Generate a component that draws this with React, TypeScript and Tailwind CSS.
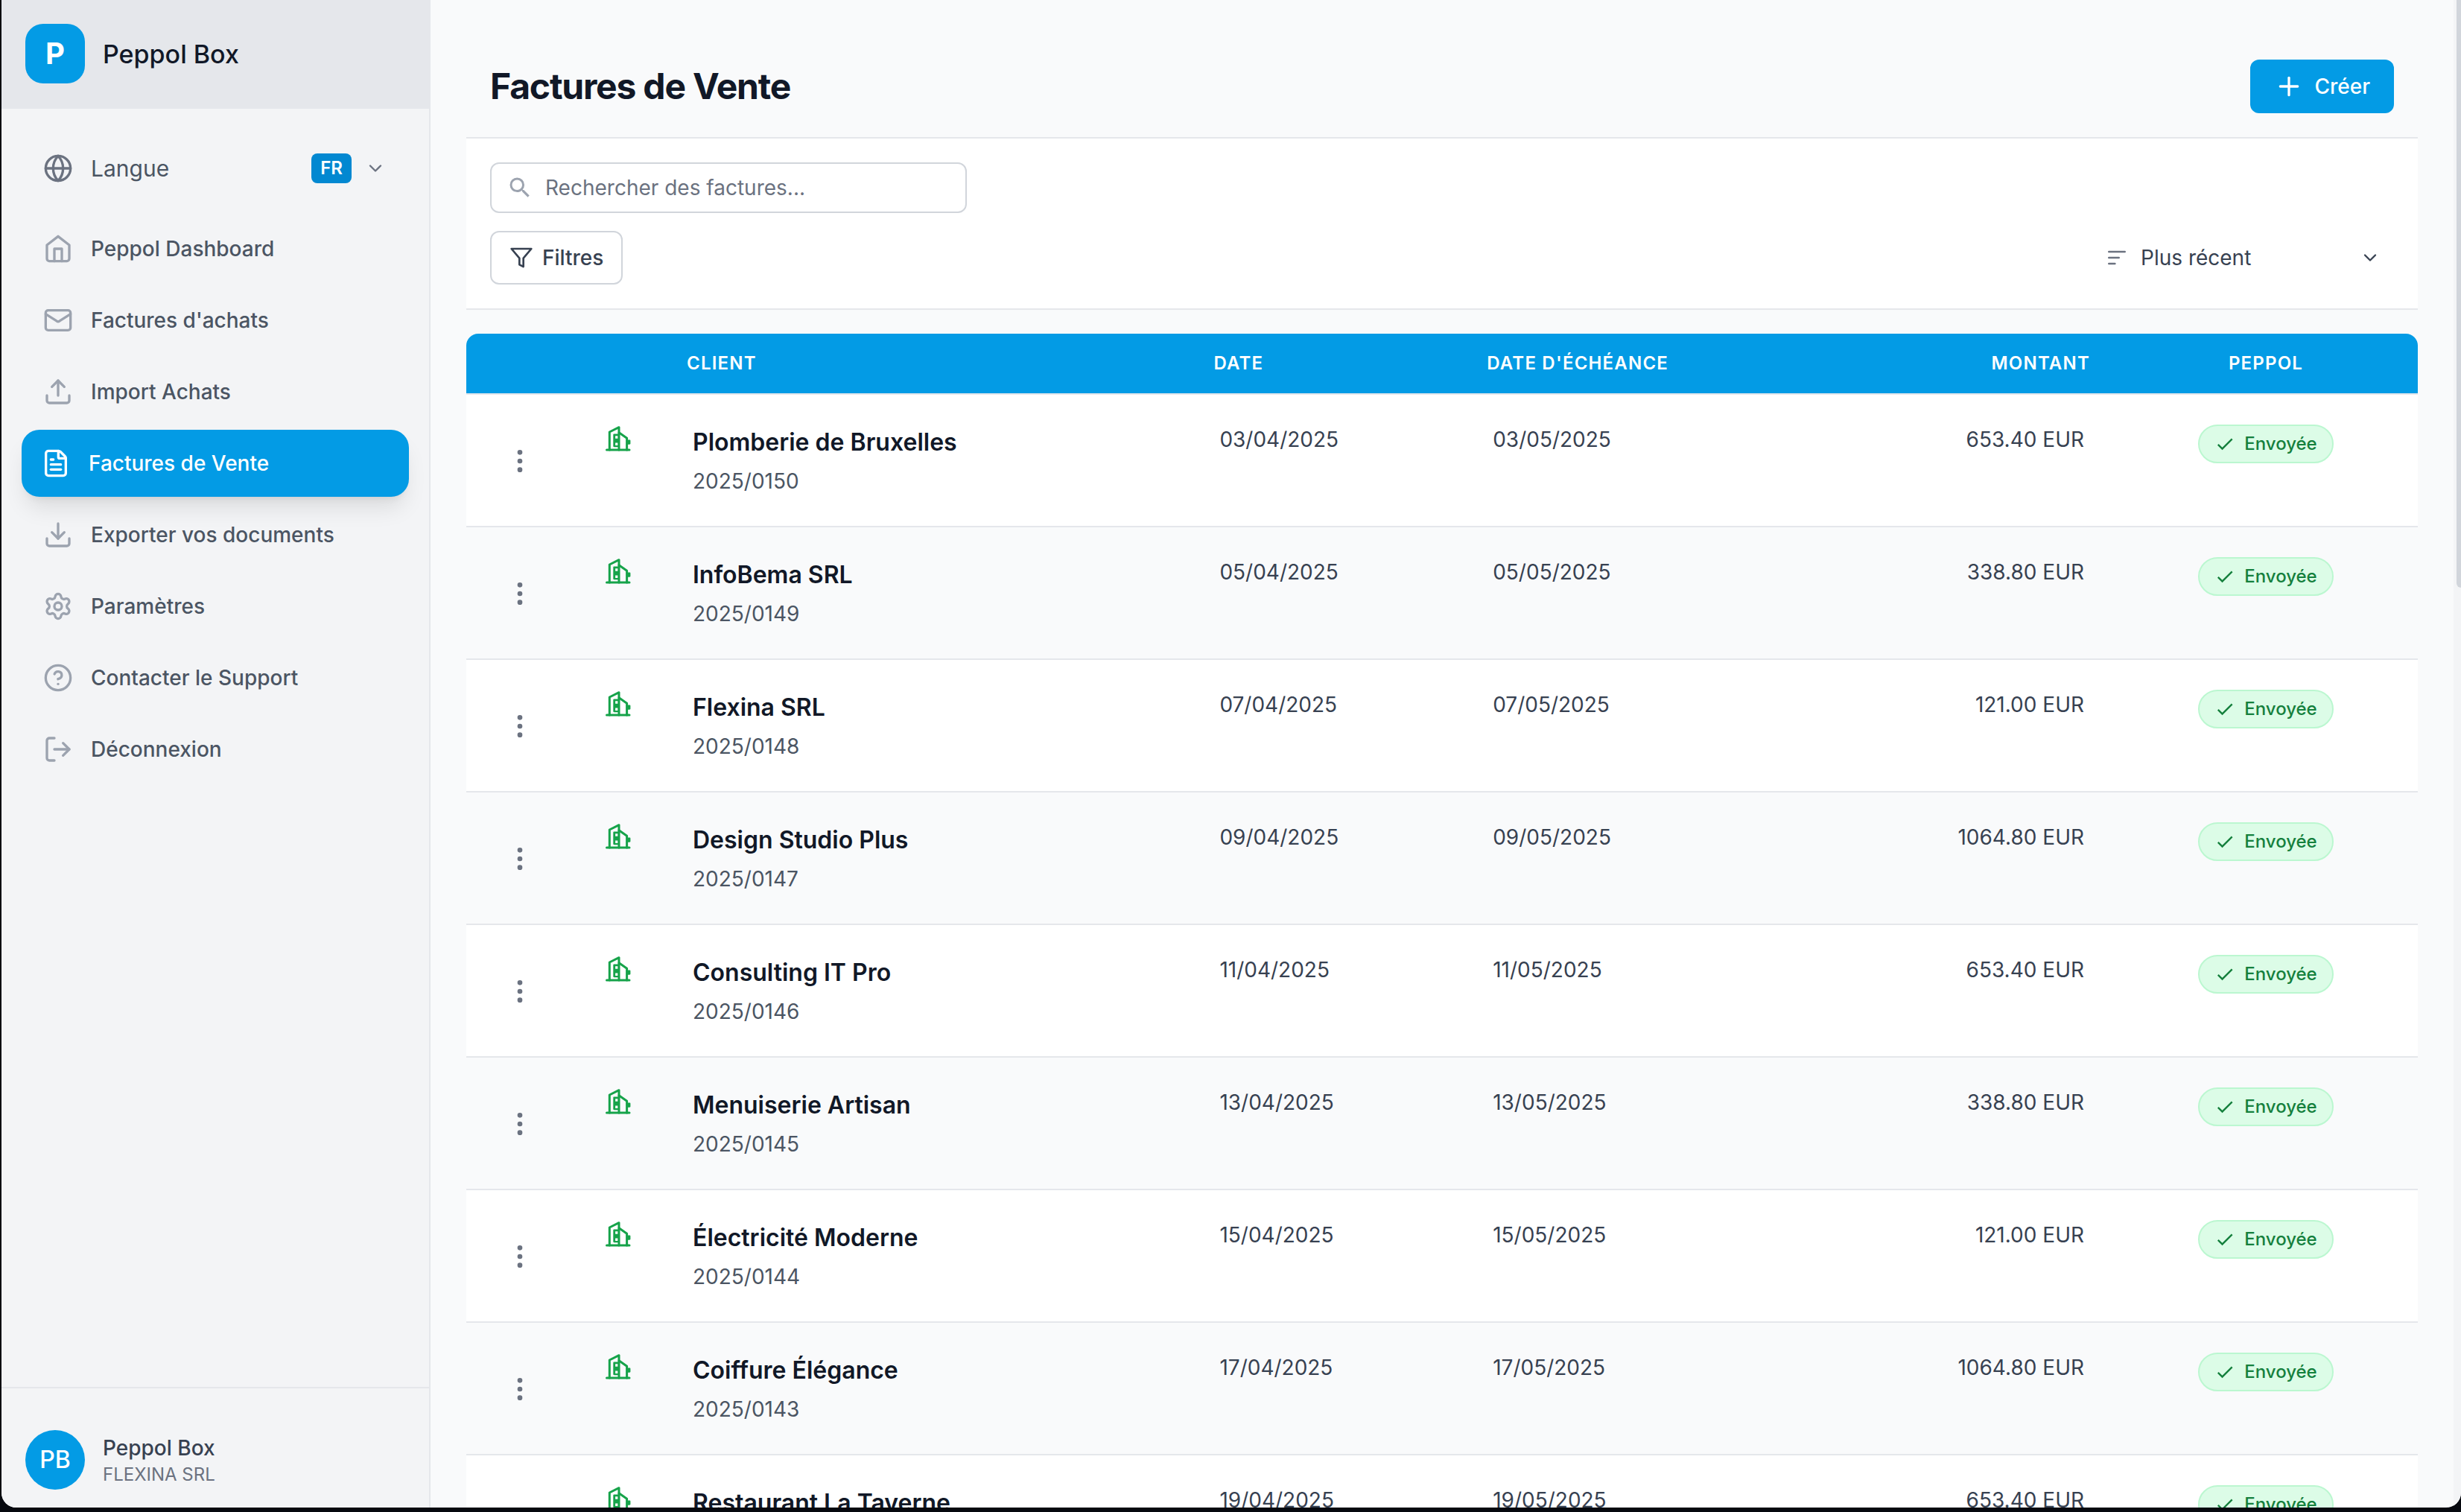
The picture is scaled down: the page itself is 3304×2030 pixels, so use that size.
import React, { useState } from 'react';
import {
    ChevronDown,
    Download,
    EllipsisVertical,
    FileText,
    Globe,
    LogOut,
    Mail,
    Plus,
    Settings,
    Upload,
} from 'lucide-react';
import { MdCheck, MdSearch } from 'react-icons/md';

type IconProps = { className?: string };

const HomeIcon = ({ className }: IconProps) => (
    <svg className={className} viewBox="0 0 24 24" fill="none" stroke="currentColor" strokeWidth="2" strokeLinecap="round" strokeLinejoin="round">
        <path d="m3 9 9-7 9 7v11a2 2 0 0 1-2 2H5a2 2 0 0 1-2-2z" />
        <path d="M9 22V12h6v10" />
    </svg>
);

const HelpIcon = ({ className }: IconProps) => (
    <svg className={className} viewBox="0 0 24 24" fill="none" stroke="currentColor" strokeWidth="2" strokeLinecap="round" strokeLinejoin="round">
        <circle cx="12" cy="12" r="10" />
        <path d="M9.09 9a3 3 0 0 1 5.83 1c0 2-3 3-3 3" />
        <path d="M12 17h.01" />
    </svg>
);

const FilterIcon = ({ className }: IconProps) => (
    <svg className={className} viewBox="0 0 24 24" fill="none" stroke="currentColor" strokeWidth="2" strokeLinecap="round" strokeLinejoin="round">
        <path d="M22 3H2l8 9.46V19l4 2v-8.54z" />
    </svg>
);

const SortIcon = ({ className }: IconProps) => (
    <svg className={className} viewBox="0 0 24 24" fill="none" stroke="currentColor" strokeWidth="2" strokeLinecap="round">
        <path d="M4 6h16M4 12h10M4 18h6" />
    </svg>
);

const CompanyIcon = ({ className }: IconProps) => (
    <svg className={className} viewBox="0 0 34 34" fill="none" stroke="currentColor" strokeWidth="3" strokeLinecap="round" strokeLinejoin="round">
        <path d="M1.5 32H32" />
        <path d="M5.3 32V8L18 1.7V32" />
        <path d="m18 8.8 10.6 7.4V32" />
        <path stroke="none" fill="currentColor" d="M28 18.6h4.2c.8 0 1.2.5 1.2 1.2v3.8c0 .7-.4 1.2-1.2 1.2H28z" />
        <path stroke="none" fill="currentColor" fillRule="evenodd" d="M11.6 10.6H18v17.6h-6.4c-.8 0-1.3-.5-1.3-1.2V11.8c0-.7.5-1.2 1.3-1.2zM13.1 13.2v3.6h3.6v-3.6zM13.1 22.4V26h3.6v-3.6z" />
    </svg>
);

const navItems = [
    { id: 'dashboard', label: 'Peppol Dashboard', icon: HomeIcon },
    { id: 'purchases', label: "Factures d'achats", icon: Mail },
    { id: 'import', label: 'Import Achats', icon: Upload },
    { id: 'sales', label: 'Factures de Vente', icon: FileText },
    { id: 'export', label: 'Exporter vos documents', icon: Download },
    { id: 'settings', label: 'Paramètres', icon: Settings },
    { id: 'support', label: 'Contacter le Support', icon: HelpIcon },
    { id: 'logout', label: 'Déconnexion', icon: LogOut },
];

const invoices = [
    { client: 'Plomberie de Bruxelles', number: '2025/0150', date: '03/04/2025', due: '03/05/2025', amount: '653.40 EUR' },
    { client: 'InfoBema SRL', number: '2025/0149', date: '05/04/2025', due: '05/05/2025', amount: '338.80 EUR' },
    { client: 'Flexina SRL', number: '2025/0148', date: '07/04/2025', due: '07/05/2025', amount: '121.00 EUR' },
    { client: 'Design Studio Plus', number: '2025/0147', date: '09/04/2025', due: '09/05/2025', amount: '1064.80 EUR' },
    { client: 'Consulting IT Pro', number: '2025/0146', date: '11/04/2025', due: '11/05/2025', amount: '653.40 EUR' },
    { client: 'Menuiserie Artisan', number: '2025/0145', date: '13/04/2025', due: '13/05/2025', amount: '338.80 EUR' },
    { client: 'Électricité Moderne', number: '2025/0144', date: '15/04/2025', due: '15/05/2025', amount: '121.00 EUR' },
    { client: 'Coiffure Élégance', number: '2025/0143', date: '17/04/2025', due: '17/05/2025', amount: '1064.80 EUR' },
    { client: 'Restaurant La Taverne', number: '2025/0142', date: '19/04/2025', due: '19/05/2025', amount: '653.40 EUR' },
];

function Sidebar() {
    const [active, setActive] = useState('sales');

    return (
        <aside className="flex w-[576px] shrink-0 flex-col border-r-2 border-[#e5e7eb] bg-[#f3f4f6]">
            <div className="flex items-center gap-6 bg-[#e5e7eb] px-8 pt-8 pb-[34px]">
                <div className="flex size-20 items-center justify-center rounded-3xl bg-[#039be5] text-[40px] font-bold text-white">P</div>
                <span className="text-[34px] font-medium text-[#111827]">Peppol Box</span>
            </div>

            <nav className="flex-1 px-8 pt-8">
                <button className="mb-4 flex h-24 w-full items-center px-6 text-[#6b7280]">
                    <Globe className="size-10" />
                    <span className="ml-6 flex-1 text-left text-[30px] text-[#4b5563]">Langue</span>
                    <span className="rounded-lg bg-[#0288d1] px-3 text-2xl/10 font-semibold text-white">FR</span>
                    <ChevronDown className="mr-0.5 ml-[18px] size-7" />
                </button>
                <ul className="flex flex-col gap-2">
                    {navItems.map(({ id, label, icon: Icon }) => (
                        <li key={id}>
                            <a
                                href={`#${id}`}
                                onClick={() => setActive(id)}
                                className={`flex items-center gap-6 rounded-3xl text-[28px] font-medium ${
                                    active === id
                                        ? '-mx-[5px] -my-px h-[90px] bg-[#039be5] px-[26px] text-white shadow-[0_20px_30px_-6px_rgb(0_0_0/0.1),0_8px_12px_-8px_rgb(0_0_0/0.1)]'
                                        : 'h-[88px] px-6 text-[#4b5563]'
                                }`}
                            >
                                <Icon className={`size-10 ${active === id ? 'text-white' : 'text-[#9ca3af]'}`} />
                                {label}
                            </a>
                        </li>
                    ))}
                </ul>
            </nav>

            <div className="flex items-center gap-6 border-t-2 border-[#e5e7eb] px-8 pt-14 pb-6">
                <div className="flex size-20 items-center justify-center rounded-full bg-[#039be5] text-[32px] font-medium text-white">PB</div>
                <div>
                    <p className="text-[28px]/10 font-medium text-[#374151]">Peppol Box</p>
                    <p className="text-2xl/8 text-[#6b7280]">FLEXINA SRL</p>
                </div>
            </div>
        </aside>
    );
}

function Toolbar() {
    return (
        <div className="flex flex-col gap-6 border-y-2 border-[#e5e7eb] bg-white p-8">
            <label className="flex h-[68px] w-[640px] items-center gap-4 rounded-xl border-2 border-[#d1d5db] px-5">
                <MdSearch className="size-9 shrink-0 text-[#9ca3af]" />
                <input
                    type="text"
                    aria-label="Rechercher des factures"
                    placeholder="Rechercher des factures..."
                    className="w-full bg-transparent text-[28px] text-[#374151] outline-none placeholder:text-[#6b7280]"
                />
            </label>
            <div className="flex items-center justify-between">
                <button className="flex h-[72px] items-center gap-3 rounded-xl border-2 border-[#d1d5db] px-6 text-[28px] font-medium text-[#374151]">
                    <FilterIcon className="size-8" />
                    Filtres
                </button>
                <label className="flex items-center gap-4 pr-[18px] text-[#374151]">
                    <SortIcon className="size-8 text-[#6b7280]" />
                    <select aria-label="Trier par" className="w-[278px] appearance-none bg-transparent text-[28px] outline-none" defaultValue="recent">
                        <option value="recent">Plus récent</option>
                        <option value="oldest">Plus ancien</option>
                    </select>
                    <ChevronDown className="pointer-events-none size-7" />
                </label>
            </div>
        </div>
    );
}

function InvoiceTable() {
    return (
        <div className="mt-8 overflow-hidden rounded-t-2xl">
            <table className="w-full table-fixed text-[28px]/10 text-[#374151]">
                <colgroup>
                    <col className="w-36" />
                    <col className="w-[120px]" />
                    <col className="w-[27%]" />
                    <col className="w-[14%]" />
                    <col className="w-[18%]" />
                    <col />
                    <col className="w-[408px]" />
                </colgroup>
                <thead>
                    <tr className="h-[81px] border-b-2 border-[#e5e7eb] bg-[#039be5] text-left text-2xl tracking-wider text-white uppercase">
                        <th aria-label="Actions"></th>
                        <th aria-label="Type"></th>
                        <th className="px-8 font-semibold">Client</th>
                        <th className="px-8 font-semibold">Date</th>
                        <th className="px-8 font-semibold">Date d'échéance</th>
                        <th className="px-8 text-right font-semibold">Montant</th>
                        <th className="px-8 text-center font-semibold">Peppol</th>
                    </tr>
                </thead>
                <tbody>
                    {invoices.map((invoice) => (
                        <tr key={invoice.number} className="border-b-2 border-[#e5e7eb] align-top odd:bg-white even:bg-[#f9fafb]">
                            <td className="text-center align-middle">
                                <button aria-label="Actions" className="align-middle text-[#6b7280]">
                                    <EllipsisVertical className="size-10" />
                                </button>
                            </td>
                            <td className="py-10">
                                <CompanyIcon className="mx-auto mt-0.5 size-[34px] text-[#16a34a]" />
                            </td>
                            <td className="p-10">
                                <p className="text-[32px]/12 font-semibold text-[#111827]">{invoice.client}</p>
                                <p className="mt-2 text-[#4b5563]">{invoice.number}</p>
                            </td>
                            <td className="p-10">{invoice.date}</td>
                            <td className="p-10">{invoice.due}</td>
                            <td className="p-10 text-right">{invoice.amount}</td>
                            <td className="py-10">
                                <div className="mx-auto flex h-[52px] w-fit items-center gap-3 rounded-full border-2 border-[#bbf7d0] bg-[#dcfce7] px-5 text-2xl font-medium text-[#15803d]">
                                    <MdCheck className="size-7" />
                                    Envoyée
                                </div>
                            </td>
                        </tr>
                    ))}
                </tbody>
            </table>
        </div>
    );
}

export default function App() {
    return (
        <div className="h-screen bg-[#07090f] pb-1.5 pl-0.5 font-[Inter,sans-serif]">
            <div className="flex h-full overflow-hidden rounded-b-[20px] bg-[#f9fafb]">
                <Sidebar />
                <main className="min-w-0 flex-1 overflow-hidden p-12">
                    <header className="flex items-center justify-between p-8">
                        <h1 className="text-5xl font-bold tracking-tight text-[#111827]">Factures de Vente</h1>
                        <button className="flex h-[72px] items-center gap-3.5 rounded-xl bg-[#039be5] px-8 text-[28px] font-medium text-white">
                            <Plus className="size-10" />
                            Créer
                        </button>
                    </header>
                    <Toolbar />
                    <InvoiceTable />
                </main>
                {/* Scroll track */}
                <div className="w-2.5 shrink-0 bg-[#f3f4f6] pl-1">
                    <div className="h-[39%] rounded-bl-md bg-[#d1d5db]"></div>
                </div>
            </div>
        </div>
    );
}
